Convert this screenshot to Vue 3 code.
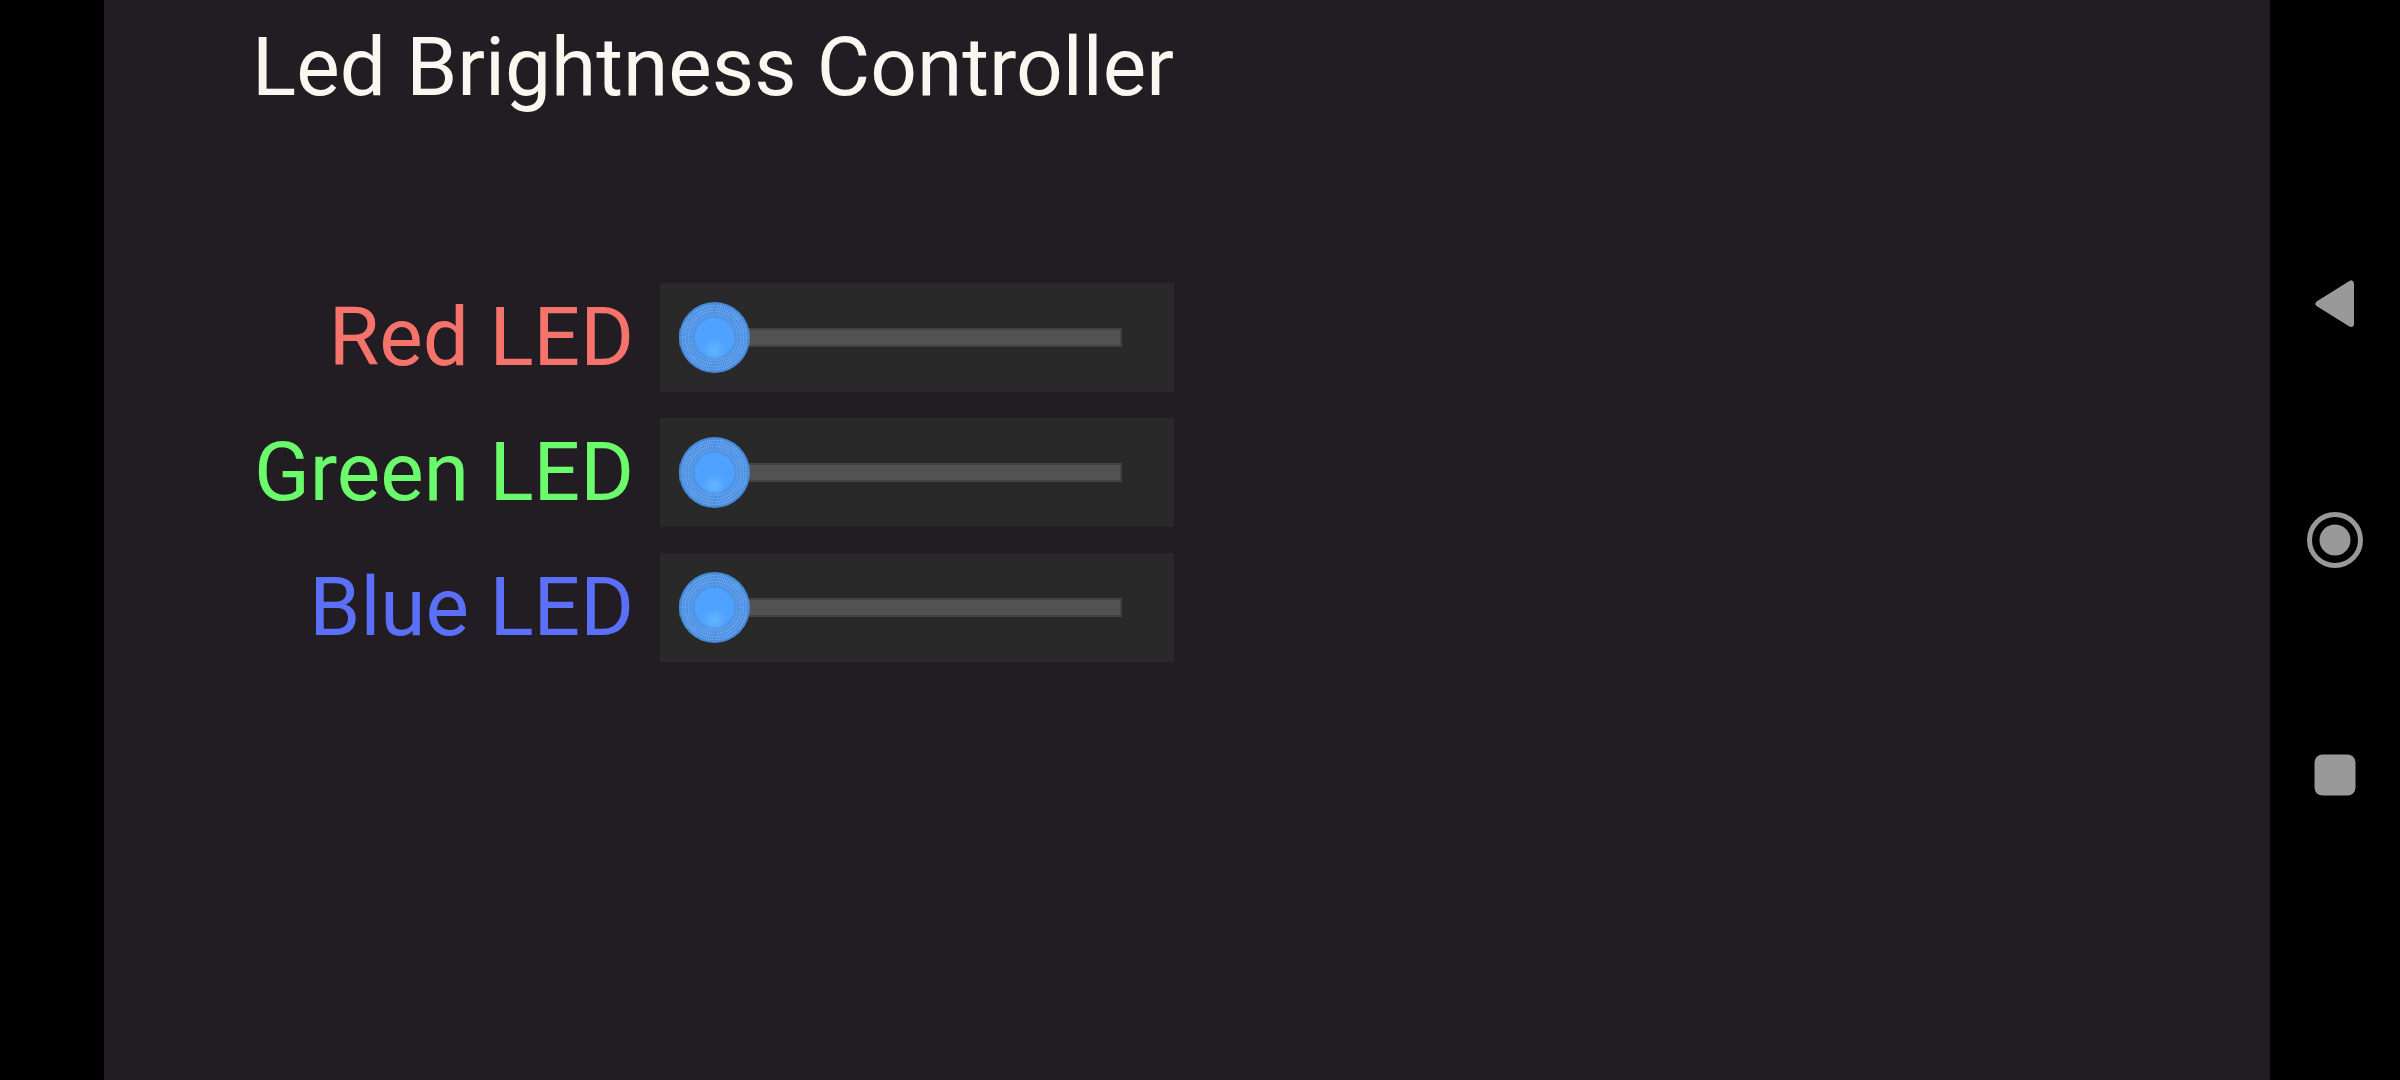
<script setup>
import { ref } from 'vue'

const leds = ref([
  { id: 'red', name: 'Red LED', level: 0 },
  { id: 'green', name: 'Green LED', level: 0 },
  { id: 'blue', name: 'Blue LED', level: 0 },
])
</script>

<template>
  <div class="screen">
    <main class="app">
      <form class="controller">
        <h1 class="title">Led Brightness Controller</h1>
        <div class="sliders">
          <template v-for="led in leds" :key="led.id">
            <label :for="led.id" class="label" :class="led.id">{{ led.name }}</label>
            <input :id="led.id" v-model.number="led.level" class="slider" type="range" min="0" max="255" />
          </template>
        </div>
      </form>
    </main>
    <nav class="navbar" aria-label="System">
      <button class="nav-button" type="button" aria-label="Back">
        <svg width="60" height="60" viewBox="0 0 60 60">
          <path d="M46 9.500V50L13.500 29.750Z" stroke-width="6" stroke-linejoin="round" />
        </svg>
      </button>
      <button class="nav-button" type="button" aria-label="Home">
        <svg width="60" height="60" viewBox="0 0 60 60">
          <circle cx="30" cy="30" r="25.500" fill="none" stroke-width="5" />
          <circle cx="30" cy="30" r="15.500" stroke="none" />
        </svg>
      </button>
      <button class="nav-button" type="button" aria-label="Recents">
        <svg width="60" height="60" viewBox="0 0 60 60">
          <rect x="9.500" y="8.500" width="41" height="41" rx="8" stroke="none" />
        </svg>
      </button>
    </nav>
  </div>
</template>

<style>
body {
  margin: 0;
  background: #000;
}
</style>

<style scoped>
.screen {
  display: flex;
  min-height: 100vh;
  padding-left: 104px;
  box-sizing: border-box;
  background: #000;
  font-family: Roboto, sans-serif;
}
.app {
  flex: 1;
  display: flex;
  align-items: flex-start;
  padding: 13px 0 0 148px;
  background: #221d22;
}
.controller {
  display: flex;
  flex-direction: column;
  gap: 161px;
}
.title,
.label {
  margin: 0;
  font-size: 82px;
  font-weight: 400;
  line-height: 109px;
  text-align: right;
  white-space: nowrap;
}
.title {
  color: #f9f7f0;
}
.sliders {
  display: grid;
  grid-template-columns: auto 514px;
  justify-content: end;
  gap: 26px;
}
.red {
  color: #f6736b;
}
.green {
  color: #6bfa6b;
}
.blue {
  color: #5b6ff8;
}
.slider {
  appearance: none;
  box-sizing: border-box;
  width: 100%;
  height: 109px;
  margin: 0;
  padding: 0 52px 0 19px;
  background: #282928;
}
.slider::-webkit-slider-runnable-track {
  box-sizing: border-box;
  height: 19px;
  border: solid #424242;
  border-width: 2px 2px 2px 0;
  background: #525252;
  clip-path: inset(-30px 0);
}
.slider::-webkit-slider-thumb {
  appearance: none;
  width: 71px;
  height: 71px;
  margin-top: -28px;
  border-radius: 50%;
  background:
    radial-gradient(circle at 50% 68%, rgba(108, 190, 255, 0.7), rgba(108, 190, 255, 0) 12px),
    radial-gradient(circle, #4fa2ff 19px, transparent 20px),
    radial-gradient(circle, transparent 32px, rgba(60, 130, 210, 0.7) 35px),
    radial-gradient(circle, #4f95e6 20px, rgba(79, 149, 230, 0) 25px),
    repeating-radial-gradient(circle, rgba(70, 135, 215, 0.4) 0 1px, rgba(110, 170, 240, 0.4) 2px 3px),
    repeating-conic-gradient(#4b8ee0 0deg 2deg, #66a5f0 2deg 4deg);
}
.navbar {
  display: flex;
  flex-direction: column;
  justify-content: center;
  width: 130px;
}
.nav-button {
  display: flex;
  align-items: center;
  justify-content: center;
  height: 236px;
  padding: 0;
  border: 0;
  background: none;
}
.nav-button svg {
  fill: #999;
  stroke: #999;
}
</style>
